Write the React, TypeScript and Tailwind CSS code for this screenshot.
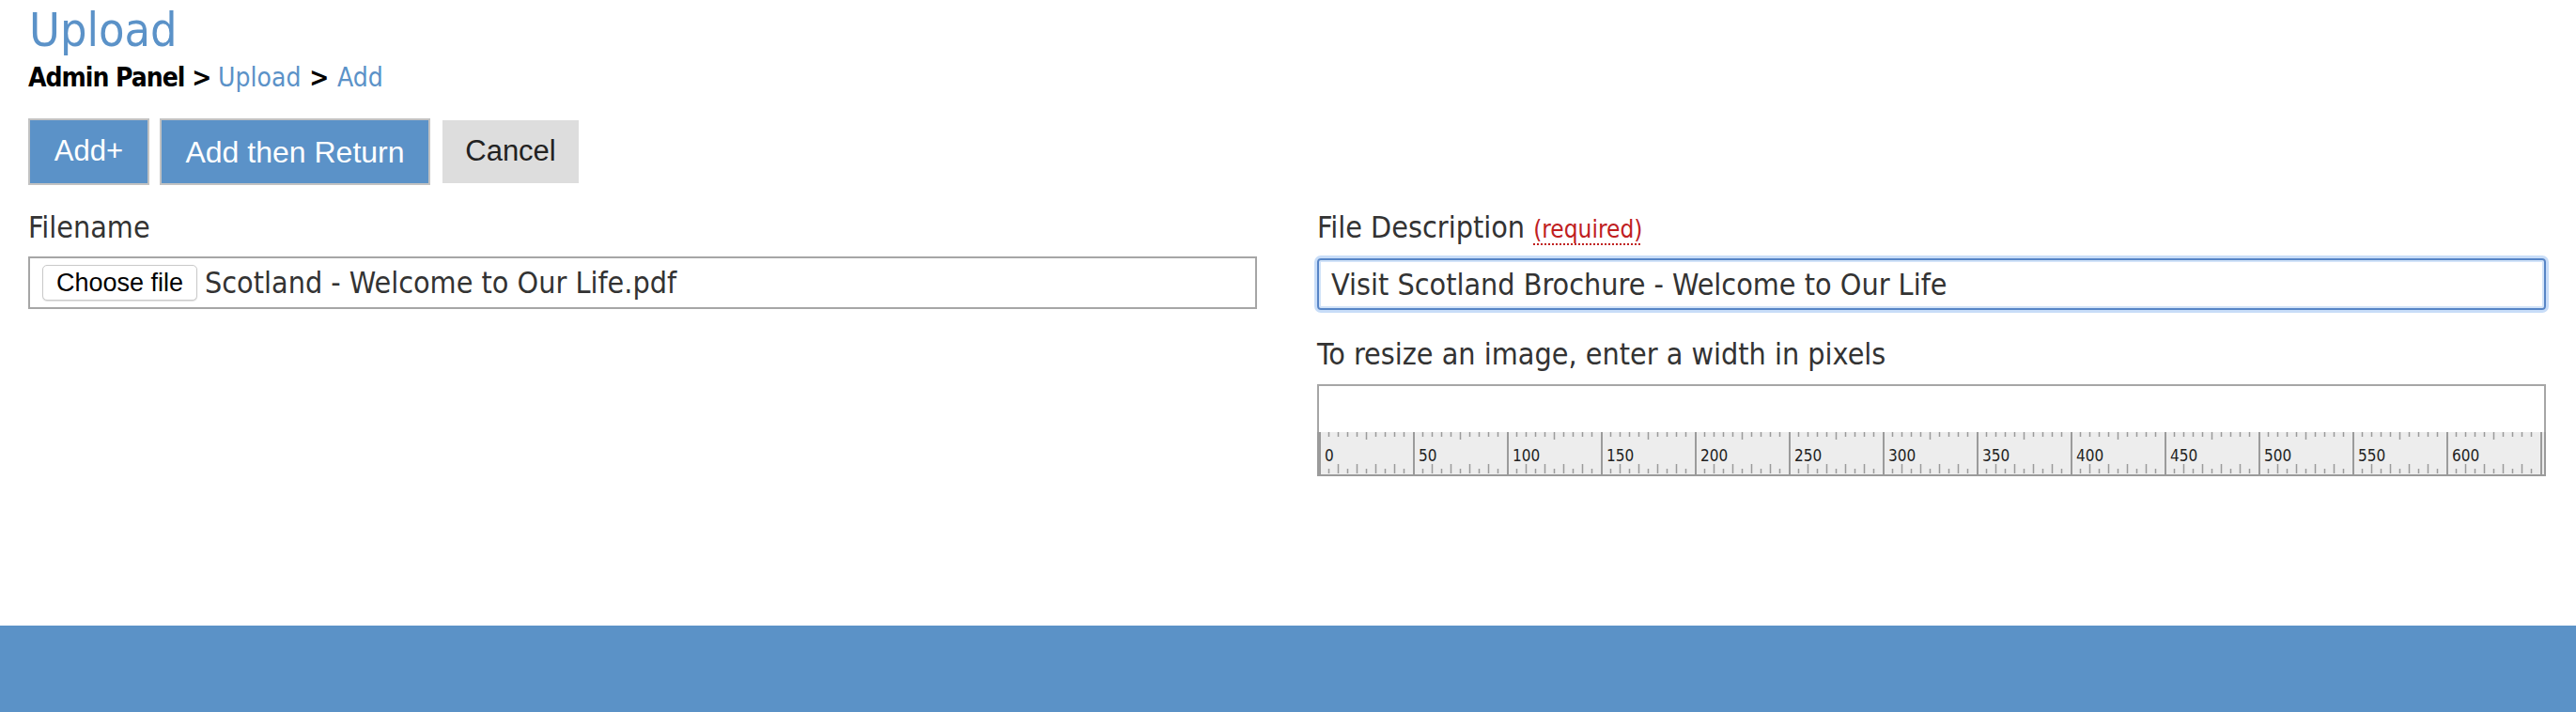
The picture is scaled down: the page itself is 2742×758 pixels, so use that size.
import type { ReactNode } from 'react';

const RULER_WIDTH = 1306;

function Ruler() {
  const ticks: ReactNode[] = [];
  for (let x = 0; x <= RULER_WIDTH; x += 10) {
    if (x % 100 === 0) {
      ticks.push(<line key={`m${x}`} x1={x + 1} y1={0} x2={x + 1} y2={46} stroke="#9b9b9b" strokeWidth={2} />);
      ticks.push(
        <text
          key={`t${x}`}
          x={x + 6}
          y={31}
          fontSize={17}
          fill="#222"
          fontFamily="'DejaVu Sans Condensed', 'DejaVu Sans', sans-serif"
        >
          {x / 2}
        </text>
      );
    } else {
      const top = x % 50 === 0 ? 8 : 5;
      const bottom = x % 20 === 0 ? 10 : 5;
      ticks.push(<line key={`a${x}`} x1={x + 0.5} y1={0} x2={x + 0.5} y2={top} stroke="#9b9b9b" strokeWidth={1.5} />);
      ticks.push(<line key={`b${x}`} x1={x + 0.5} y1={44 - bottom} x2={x + 0.5} y2={44} stroke="#9b9b9b" strokeWidth={1.5} />);
    }
  }

  return (
    <div className="h-[47px] bg-[#ededed] border-x-2 border-b-2 border-[#9b9b9b] overflow-hidden">
      <svg width="100%" height="46" className="block">
        {ticks}
      </svg>
    </div>
  );
}

export default function App() {
  return (
    <div className="min-h-screen bg-white text-[#333] font-['DejaVu_Sans_Condensed','DejaVu_Sans',sans-serif]">
      <div className="h-[666px] px-[30px] pr-[32px]">
        {/* Heading */}
        <h1 className="text-[50px] leading-[65px] text-[#5b92c8] pl-[1px]">Upload</h1>
        <div className="text-[28px] leading-[36px] text-black">
          <span className="font-bold tracking-[-1px]">Admin Panel &gt; </span>
          <a className="text-[#5b92c8]">Upload</a>
          <span className="font-bold"> &gt; </span>
          <a className="text-[#5b92c8]">Add</a>
        </div>

        {/* Actions */}
        <div className="mt-[25px] flex gap-[11px] font-['Liberation_Sans',Arial,sans-serif] text-[31px]">
          <button className="h-[71px] w-[129px] border-2 border-[#c2c2c2] bg-[#5b92c8] text-white">Add+</button>
          <button className="h-[71px] w-[288px] border-2 border-[#c2c2c2] bg-[#5b92c8] text-white text-[32px]">Add then Return</button>
          <button className="h-[71px] w-[149px] border-2 border-white bg-[#dddddd] text-[#222]">Cancel</button>
        </div>

        {/* Form */}
        <div className="mt-[27px] grid grid-cols-2 gap-[64px]">
          <div>
            <label className="block text-[32px] leading-[36px]">Filename</label>
            <div className="mt-[13px] h-[56px] border-2 border-[#a6a6a6] flex items-center pl-[13px]">
              <button className="h-[38px] w-[165px] rounded-[5px] border border-[#c9c9c9] bg-white shadow-[0_1px_1px_rgba(0,0,0,0.12)] font-['Liberation_Sans',Arial,sans-serif] text-[27px] text-black leading-[36px]">
                Choose file
              </button>
              <span className="ml-[8px] text-[32px] leading-[40px]">Scotland - Welcome to Our Life.pdf</span>
            </div>
          </div>

          <div>
            <label className="block text-[32px] leading-[36px]">
              File Description{' '}
              <span className="text-[26px] text-[#c0201f] underline decoration-dotted decoration-2 underline-offset-[6px]">(required)</span>
            </label>
            <input
              readOnly
              value="Visit Scotland Brochure - Welcome to Our Life"
              className="mt-[13px] block w-full h-[55px] rounded-[4px] border-2 border-[#5785c6] shadow-[0_0_0_3px_#c8ddf8,inset_0_0_0_2px_#d2e3f8] px-[13px] text-[32px] text-[#333] outline-none"
            />

            <label className="block mt-[29px] text-[32px] leading-[36px]">To resize an image, enter a width in pixels</label>
            <input readOnly className="mt-[14px] block w-full h-[51px] border-x-2 border-t-2 border-[#a6a6a6] bg-white outline-none" />
            <Ruler />
          </div>
        </div>
      </div>

      {/* Footer */}
      <footer className="h-[92px] bg-[#5b92c7]" />
    </div>
  );
}
